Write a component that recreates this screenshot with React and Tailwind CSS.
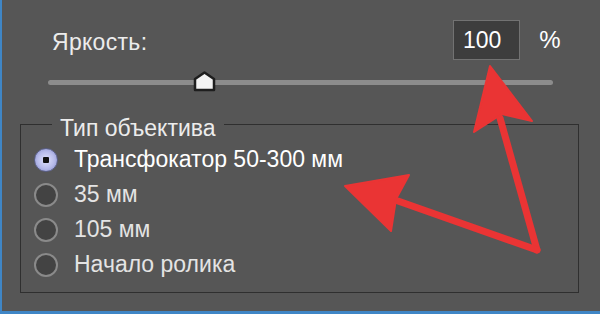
import React from "react";

const options = ["Трансфокатор 50-300 мм", "35 мм", "105 мм", "Начало ролика"];

function Radio({ checked }) {
    if (checked) {
        return (
            <span className="flex h-[24px] w-[24px] shrink-0 items-center justify-center rounded-full border border-[#5a5f86] bg-[radial-gradient(circle,#dfe1fb_0%,#b6baea_55%,#7f86c4_100%)]">
                <span className="h-[6px] w-[6px] rounded-[1px] bg-[#111]" />
            </span>
        );
    }
    return (
        <span className="h-[24px] w-[24px] shrink-0 rounded-full border-2 border-[#8a8a8a] bg-[#434343]" />
    );
}

function Arrows() {
    return (
        <svg
            className="pointer-events-none absolute inset-0"
            width="600"
            height="314"
            viewBox="0 0 600 314"
        >
            <g fill="#ea3434" stroke="#ea3434" strokeLinejoin="round">
                <line x1="535" y1="250" x2="498" y2="118" strokeWidth="7" strokeLinecap="round" />
                <line x1="535" y1="250" x2="396" y2="201" strokeWidth="7" strokeLinecap="round" />
                <polygon points="488,66 530,121 500,114 472,132" strokeWidth="2" />
                <polygon points="343,186 407,175 394,199 389,231" strokeWidth="2" />
            </g>
        </svg>
    );
}

export default function App() {
    return (
        <div className="relative h-[314px] w-[600px] overflow-hidden border-b-[3px] border-l-2 border-[#3f86c6] bg-[#565656] font-['Liberation_Sans',Arial,sans-serif] text-[23px] leading-none text-[#ececec]">
            {/* Brightness */}
            <div className="flex items-center pl-[50px] pt-[20px]">
                <span className="mt-[5px] flex-1 tracking-[0.3px]">Яркость:</span>
                <div className="flex h-[40px] w-[67px] items-center border border-[#727272] bg-[#3d3d3d] pl-[9px] text-white">
                    100
                </div>
                <span className="ml-[18px] mr-[38px] w-[24px] text-center text-[24px] text-white">%</span>
            </div>

            <div className="relative ml-[46px] mt-[20px] h-[5px] w-[505px] rounded-full bg-[#8c8c8c]">
                <svg
                    className="absolute left-[145px] top-[-9px]"
                    width="23"
                    height="21"
                    viewBox="0 0 23 21"
                >
                    <path
                        d="M11.5 1.5 L21 8 L21 19 L2 19 L2 8 Z"
                        fill="#f3f3f3"
                        stroke="#1e1e1e"
                        strokeWidth="2.5"
                        strokeLinejoin="round"
                    />
                </svg>
            </div>

            {/* Lens type */}
            <fieldset className="ml-[18px] mt-[23px] w-[559px] border border-[#2f2f2f] pb-[10px] pl-[13px]">
                <legend className="ml-[18px] px-[8px] pt-[9px]">Тип объектива</legend>
                <div className="flex flex-col pt-[2px]">
                    {options.map((label, i) => (
                        <label key={label} className="flex h-[35px] items-center gap-[16px]">
                            <Radio checked={i === 0} />
                            <span className={i === 0 ? "text-white" : "text-[#e4e4e4]"}>
                                {label}
                            </span>
                        </label>
                    ))}
                </div>
            </fieldset>

            <Arrows />
        </div>
    );
}
